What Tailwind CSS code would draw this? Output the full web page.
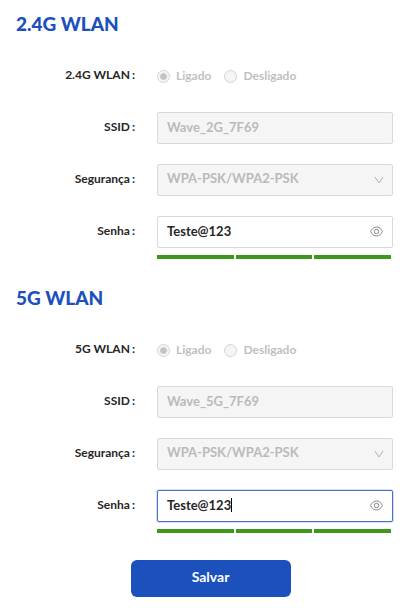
<!DOCTYPE html>
<html lang="pt-BR">
<head>
  <meta charset="UTF-8" />
  <meta name="viewport" content="width=device-width, initial-scale=1.0"/>
  <title>WLAN</title>
  <script src="https://cdn.jsdelivr.net/npm/@tailwindcss/browser@4"></script>
</head>
<body class="bg-white px-4 pt-[10px] pb-5 font-['Lato',sans-serif] text-xs font-bold text-[#262626]">
  <form class="flex flex-col gap-[25px]">
    <section>
      <h2 class="mb-[22px] text-[19px] leading-7 font-black text-[#1c50bd]">2.4G WLAN</h2>
      <div class="grid grid-cols-[119px_1fr] gap-x-[22px] gap-y-5">
        <span id="wlan24" class="flex h-8 items-center justify-end gap-0.5 pb-0.5">2.4G WLAN<span>:</span></span>
        <div role="radiogroup" aria-labelledby="wlan24" class="flex h-8 items-center gap-[13px] text-[#bfbfbf]">
          <label class="flex items-center gap-1.5">
            <input type="radio" name="wlan24" checked disabled class="size-[13px] appearance-none rounded-full border border-[#d4d4d4] bg-[#c4c4c4] bg-clip-content p-0.5 shadow-[inset_0_0_0_2px_#f5f5f5]" />Ligado
          </label>
          <label class="flex items-center gap-1.5">
            <input type="radio" name="wlan24" disabled class="size-[13px] appearance-none rounded-full border border-[#d4d4d4] bg-[#f5f5f5]" />Desligado
          </label>
        </div>

        <label for="ssid24" class="flex h-8 items-center justify-end gap-0.5 pb-0.5">SSID<span>:</span></label>
        <input id="ssid24" type="text" value="Wave_2G_7F69" disabled class="h-8 w-full rounded-xs border border-[#d9d9d9] bg-[#f5f5f5] px-[9px] pb-[3px] text-[13px] text-[#bababa]" />

        <label for="sec24" class="flex h-8 items-center justify-end gap-0.5 pb-0.5">Segurança<span>:</span></label>
        <div class="relative">
          <select id="sec24" disabled class="h-8 w-full appearance-none rounded-xs border border-[#d9d9d9] bg-[#f5f5f5] px-[9px] pb-[3px] text-[13px] text-[#bababa] opacity-100">
            <option>WPA-PSK/WPA2-PSK</option>
          </select>
          <svg class="pointer-events-none absolute top-[11px] right-[9px] h-[10px] w-[10px]" viewBox="0 0 10 10" fill="none" stroke="#b0b0b0"><path d="M1 2 5 8 9 2"/></svg>
        </div>

        <label for="pass24" class="flex h-8 items-center justify-end gap-0.5 pb-0.5">Senha<span>:</span></label>
        <div>
          <div class="relative">
            <input id="pass24" type="text" value="Teste@123" class="h-8 w-full rounded-xs border border-[#d9d9d9] bg-white pr-8 pb-[3px] pl-[9px] text-[13px] outline-none" />
            <button type="button" aria-label="Mostrar senha" class="absolute top-[10px] right-[10px]">
              <svg class="block h-[11px] w-[13px]" viewBox="0 0 13 11" fill="none" stroke="#858585"><path d="M.6 5.500C2 2.600 4 1 6.500 1s4.500 1.600 5.900 4.500C11 8.400 9 10 6.500 10S2 8.400.6 5.500Z"/><circle cx="6.500" cy="5.500" r="2.200"/></svg>
            </button>
          </div>
          <div class="mt-[7px] mr-0.5 grid grid-cols-3 gap-0.5">
            <div class="h-1 bg-[#3d981c]"></div>
            <div class="h-1 bg-[#3d981c]"></div>
            <div class="h-1 bg-[#3d981c]"></div>
          </div>
        </div>
      </div>
    </section>

    <section>
      <h2 class="mb-[22px] text-[19px] leading-7 font-black text-[#1c50bd]">5G WLAN</h2>
      <div class="grid grid-cols-[119px_1fr] gap-x-[22px] gap-y-5">
        <span id="wlan5" class="flex h-8 items-center justify-end gap-0.5 pb-0.5">5G WLAN<span>:</span></span>
        <div role="radiogroup" aria-labelledby="wlan5" class="flex h-8 items-center gap-[13px] text-[#bfbfbf]">
          <label class="flex items-center gap-1.5">
            <input type="radio" name="wlan5" checked disabled class="size-[13px] appearance-none rounded-full border border-[#d4d4d4] bg-[#c4c4c4] bg-clip-content p-0.5 shadow-[inset_0_0_0_2px_#f5f5f5]" />Ligado
          </label>
          <label class="flex items-center gap-1.5">
            <input type="radio" name="wlan5" disabled class="size-[13px] appearance-none rounded-full border border-[#d4d4d4] bg-[#f5f5f5]" />Desligado
          </label>
        </div>

        <label for="ssid5" class="flex h-8 items-center justify-end gap-0.5 pb-0.5">SSID<span>:</span></label>
        <input id="ssid5" type="text" value="Wave_5G_7F69" disabled class="h-8 w-full rounded-xs border border-[#d9d9d9] bg-[#f5f5f5] px-[9px] pb-[3px] text-[13px] text-[#bababa]" />

        <label for="sec5" class="flex h-8 items-center justify-end gap-0.5 pb-0.5">Segurança<span>:</span></label>
        <div class="relative">
          <select id="sec5" disabled class="h-8 w-full appearance-none rounded-xs border border-[#d9d9d9] bg-[#f5f5f5] px-[9px] pb-[3px] text-[13px] text-[#bababa] opacity-100">
            <option>WPA-PSK/WPA2-PSK</option>
          </select>
          <svg class="pointer-events-none absolute top-[11px] right-[9px] h-[10px] w-[10px]" viewBox="0 0 10 10" fill="none" stroke="#b0b0b0"><path d="M1 2 5 8 9 2"/></svg>
        </div>

        <label for="pass5" class="flex h-8 items-center justify-end gap-0.5 pb-0.5">Senha<span>:</span></label>
        <div>
          <div class="relative">
            <input id="pass5" type="text" value="Teste@123" class="h-8 w-full rounded-xs border border-[#4a6fc6] bg-white pr-8 pb-[3px] pl-[9px] text-[13px] shadow-[0_0_0_1px_#d5def3] outline-none" />
            <span class="absolute top-2 left-[74px] h-[14px] w-px bg-black"></span>
            <button type="button" aria-label="Mostrar senha" class="absolute top-[10px] right-[10px]">
              <svg class="block h-[11px] w-[13px]" viewBox="0 0 13 11" fill="none" stroke="#858585"><path d="M.6 5.500C2 2.600 4 1 6.500 1s4.500 1.600 5.900 4.500C11 8.400 9 10 6.500 10S2 8.400.6 5.500Z"/><circle cx="6.500" cy="5.500" r="2.200"/></svg>
            </button>
          </div>
          <div class="mt-[7px] mr-0.5 grid grid-cols-3 gap-0.5">
            <div class="h-1 bg-[#3d981c]"></div>
            <div class="h-1 bg-[#3d981c]"></div>
            <div class="h-1 bg-[#3d981c]"></div>
          </div>
        </div>
      </div>
    </section>

    <div class="flex justify-center pt-0.5 pl-3">
      <button type="submit" class="w-40 rounded-md bg-[#1c50bd] pt-[7px] pb-[10px] text-sm text-white">Salvar</button>
    </div>
  </form>
</body>
</html>
